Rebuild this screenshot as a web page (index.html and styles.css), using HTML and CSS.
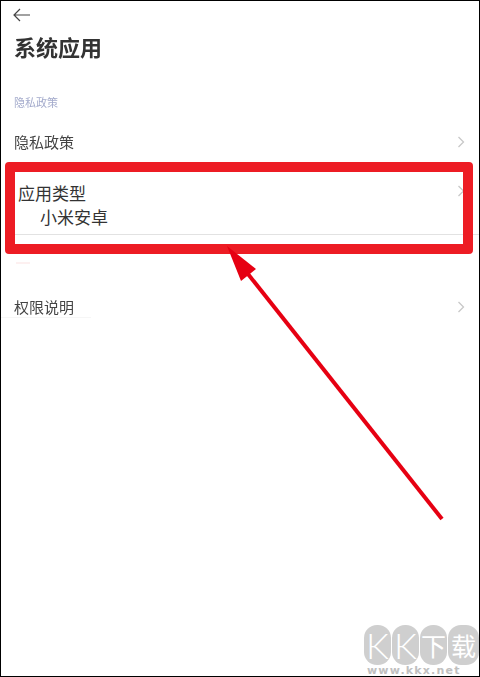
FILE: index.html
```html
<!DOCTYPE html>
<html lang="zh-CN">
<head>
<meta charset="utf-8">
<title>系统应用</title>
<link rel="stylesheet" href="styles.css">
</head>
<body>
<main class="frame">
  <header class="header">
    <svg class="back" width="20" height="14" viewBox="0 0 20 14" aria-hidden="true"><path d="M18 7H2M8 1 2 7l6 6" fill="none" stroke="#444" stroke-width="1.2"/></svg>
    <h1 class="title">系统应用</h1>
  </header>
  <div class="section-label">隐私政策</div>
  <div class="row row-privacy">
    <span class="row-text">隐私政策</span>
    <svg class="chevron" width="8" height="12" viewBox="0 0 8 12" aria-hidden="true"><path d="M1.5 1 6.5 6l-5 5" fill="none" stroke="#c8c8c8" stroke-width="1.3"/></svg>
  </div>
  <div class="row-type">
    <div class="type-top">
      <span class="type-label">应用类型</span>
      <svg class="chevron chevron-up" width="8" height="12" viewBox="0 0 8 12" aria-hidden="true"><path d="M1.5 1 6.5 6l-5 5" fill="none" stroke="#c8c8c8" stroke-width="1.3"/></svg>
    </div>
    <div class="type-value">小米安卓</div>
    <div class="divider"></div>
  </div>
  <div class="smear"></div>
  <div class="row row-perm">
    <span class="row-text">权限说明</span>
    <svg class="chevron" width="8" height="12" viewBox="0 0 8 12" aria-hidden="true"><path d="M1.5 1 6.5 6l-5 5" fill="none" stroke="#c8c8c8" stroke-width="1.3"/></svg>
  </div>
  <div class="perm-line"></div>

  <div class="highlight"></div>
  <svg class="arrow" width="480" height="677" viewBox="0 0 480 677" aria-hidden="true">
    <path d="M442 519 248 274" fill="none" stroke="#e60012" stroke-width="4"/>
    <path d="M227 246 256 269 241 281Z" fill="#e60012"/>
  </svg>
  <div class="watermark">
    <div class="wm-logo">
      <span class="wm-char wm-latin">K</span><span class="wm-char wm-latin">K</span><span class="wm-char">下</span><span class="wm-char wm-wide">载</span>
    </div>
    <div class="wm-url">www.kkx.net</div>
  </div>
</main>
</body>
</html>
```
FILE: styles.css
```css
* { box-sizing: border-box; }
html, body { margin: 0; padding: 0; background: #fff; }
body { font-family: "Noto Sans CJK SC", "Noto Sans", sans-serif; color: #333; }
.frame {
  position: relative;
  width: 480px;
  height: 677px;
  border: 1px solid #000;
  overflow: hidden;
  background: #fff;
}
.header { padding: 7px 0 0 11px; }
.back { display: block; }
.title {
  margin: 8px 0 0 2px;
  font-size: 22px;
  line-height: 32px;
  font-weight: 700;
  color: #333;
  filter: blur(0.4px);
}
.section-label {
  margin: 32px 0 0 13px;
  font-size: 11px;
  line-height: 16px;
  color: #a4abcc;
  filter: blur(0.4px);
}
.row {
  display: flex;
  align-items: center;
  justify-content: space-between;
  padding: 0 14px 0 13px;
}
.row-privacy { margin-top: 20px; height: 24px; }
.row-text { font-size: 15px; line-height: 24px; color: #444; filter: blur(0.4px); }
.row-type { margin-top: 26px; padding-left: 17px; }
.type-top {
  display: flex;
  align-items: center;
  justify-content: space-between;
  height: 26px;
  padding-right: 14px;
}
.chevron-up { margin-top: -4px; }
.type-label { font-size: 17px; line-height: 26px; color: #333; }
.type-value { margin: -2px 0 0 22px; font-size: 17px; line-height: 26px; color: #333; }
.divider { margin: 4px 0 0 -3px; height: 1px; background: #e2e2e2; }
.smear {
  margin: 27px 0 0 15px;
  width: 14px;
  height: 2px;
  background: #fdf0f0;
  filter: blur(0.6px);
}
.row-perm { margin-top: 31px; height: 24px; }
.perm-line {
  margin-top: -2px;
  width: 90px;
  height: 1px;
  background: #f6f6f6;
}
.highlight {
  position: absolute;
  left: 4px;
  top: 161px;
  width: 468px;
  height: 92px;
  border: 10px solid #ed1c24;
  border-radius: 4px;
}
.arrow { position: absolute; left: -1px; top: -1px; }
.watermark {
  position: absolute;
  right: 0;
  bottom: 1px;
  width: 115px;
}
.wm-logo { display: flex; gap: 1px; }
.wm-char {
  display: flex;
  align-items: center;
  justify-content: center;
  width: 28px;
  height: 40px;
  border-radius: 13px;
  background: #cfcfcf;
  color: #fff;
  font-size: 25px;
  line-height: 1;
}
.wm-latin {
  font-family: "Lato", sans-serif;
  font-weight: 300;
  font-size: 36px;
}
.wm-wide { width: 32px; }
.wm-url {
  margin: 2px 0 0 3px;
  font-family: "DejaVu Sans", sans-serif;
  font-weight: 700;
  font-size: 11px;
  line-height: 8px;
  letter-spacing: 1.2px;
  color: #c0c0c0;
}
```
